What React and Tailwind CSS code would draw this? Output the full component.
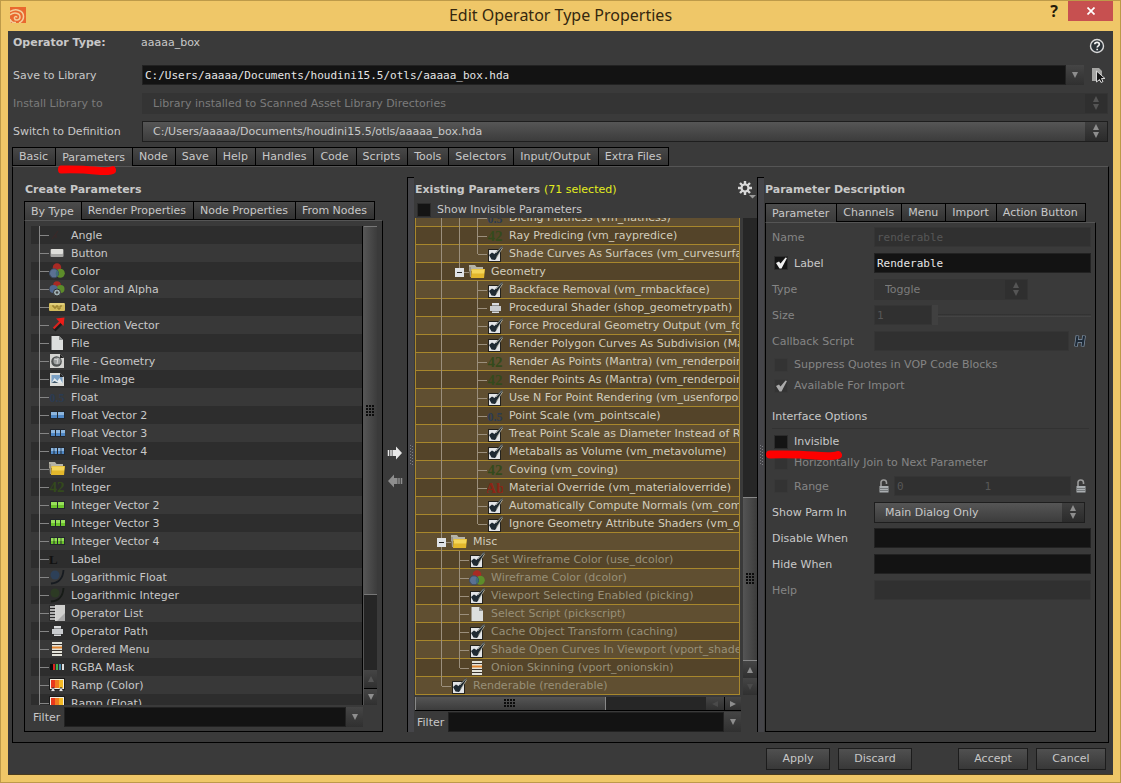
import { clsx } from 'clsx'
import { useState } from 'react'

const mainTabs = ['Basic', 'Parameters', 'Node', 'Save', 'Help', 'Handles', 'Code', 'Scripts', 'Tools', 'Selectors', 'Input/Output', 'Extra Files']
const createTabs = ['By Type', 'Render Properties', 'Node Properties', 'From Nodes']
const descTabs = ['Parameter', 'Channels', 'Menu', 'Import', 'Action Button']

const types = [
  ['Angle', 'angle'],
  ['Button', 'button'],
  ['Color', 'color'],
  ['Color and Alpha', 'alpha'],
  ['Data', 'data'],
  ['Direction Vector', 'arrow'],
  ['File', 'file'],
  ['File - Geometry', 'geo'],
  ['File - Image', 'image'],
  ['Float', 'float'],
  ['Float Vector 2', 'fv2'],
  ['Float Vector 3', 'fv3'],
  ['Float Vector 4', 'fv4'],
  ['Folder', 'folder'],
  ['Integer', 'int'],
  ['Integer Vector 2', 'iv2'],
  ['Integer Vector 3', 'iv3'],
  ['Integer Vector 4', 'iv4'],
  ['Label', 'label'],
  ['Logarithmic Float', 'logf'],
  ['Logarithmic Integer', 'logi'],
  ['Operator List', 'oplist'],
  ['Operator Path', 'op'],
  ['Ordered Menu', 'menu'],
  ['RGBA Mask', 'rgba'],
  ['Ramp (Color)', 'ramp'],
  ['Ramp (Float)', 'ramp'],
]

// tree column codes: | line, . blank, + branch, L last branch, M open folder, m last open folder
const params = [
  ['||+', 'float', 'Dicing Flatness (vm_flatness)'],
  ['||+', 'int', 'Ray Predicing (vm_raypredice)'],
  ['||L', 'check', 'Shade Curves As Surfaces (vm_curvesurfa'],
  ['|m', 'folder', 'Geometry'],
  ['|.+', 'check', 'Backface Removal (vm_rmbackface)'],
  ['|.+', 'op', 'Procedural Shader (shop_geometrypath)'],
  ['|.+', 'check', 'Force Procedural Geometry Output (vm_for'],
  ['|.+', 'check', 'Render Polygon Curves As Subdivision (Ma'],
  ['|.+', 'int', 'Render As Points (Mantra) (vm_renderpoin'],
  ['|.+', 'int', 'Render Points As (Mantra) (vm_renderpoin'],
  ['|.+', 'check', 'Use N For Point Rendering (vm_usenforpoi'],
  ['|.+', 'float', 'Point Scale (vm_pointscale)'],
  ['|.+', 'check', 'Treat Point Scale as Diameter Instead of Ra'],
  ['|.+', 'check', 'Metaballs as Volume (vm_metavolume)'],
  ['|.+', 'int', 'Coving (vm_coving)'],
  ['|.+', 'string', 'Material Override (vm_materialoverride)'],
  ['|.+', 'check', 'Automatically Compute Normals (vm_com'],
  ['|.L', 'check', 'Ignore Geometry Attribute Shaders (vm_ov'],
  ['M', 'folder', 'Misc'],
  ['|+', 'check', 'Set Wireframe Color (use_dcolor)', true],
  ['|+', 'color', 'Wireframe Color (dcolor)', true],
  ['|+', 'check', 'Viewport Selecting Enabled (picking)', true],
  ['|+', 'file', 'Select Script (pickscript)', true],
  ['|+', 'check', 'Cache Object Transform (caching)', true],
  ['|+', 'check', 'Shade Open Curves In Viewport (vport_shade', true],
  ['|L', 'menu', 'Onion Skinning (vport_onionskin)', true],
  ['L', 'check', 'Renderable (renderable)', true],
]

function Cells({ n, fill, light }) {
  const w = n === 2 ? 6 : n === 3 ? 4 : 2.5
  const step = n === 2 ? 7 : n === 3 ? 5 : 3.5
  return (
    <>
      <rect x="1" y="4" width="15" height="8" fill="#22262c" />
      {Array.from({ length: n }, (_, i) => (
        <g key={i}>
          <rect x={2 + i * step} y="5" width={w} height="6" fill={fill} />
          <rect x={2 + i * step} y="5" width={w} height="3" fill={light} />
        </g>
      ))}
    </>
  )
}

function Glyph({ children, fill, size = 15 }) {
  return (
    <text x="8" y="13" textAnchor="middle" fontSize={size} fontWeight="bold" fontFamily="Liberation Serif, serif" fill={fill}>
      {children}
    </text>
  )
}

const drawings = {
  angle: <path d="M3 12L9 4M7 11V8" stroke="#3c2828" fill="none" />,
  button: (
    <>
      <rect x="1.5" y="4" width="13" height="8" rx="1" fill="#a9a9a7" />
      <rect x="2" y="4" width="12" height="5" rx="1" fill="#dededa" />
    </>
  ),
  color: (
    <>
      <circle cx="8" cy="4.5" r="4.2" fill="#a92a24" />
      <circle cx="11.3" cy="10.3" r="4.5" fill="#5d8c2a" />
      <circle cx="5" cy="10.3" r="4.5" fill="#5b7193" stroke="#3d4b62" />
      <path d="M8 7.2a4.5 4.5 0 0 1 0 6.4a4.5 4.5 0 0 1 0-6.4z" fill="#3f6f78" />
    </>
  ),
  alpha: (
    <>
      <circle cx="8" cy="4" r="3.8" fill="#a92a24" />
      <circle cx="11.5" cy="8" r="4" fill="#5d8c2a" />
      <circle cx="4.5" cy="8" r="4" fill="#506890" />
      <circle cx="8" cy="11.5" r="3.5" fill="#9fb0b4" stroke="#333" />
      <circle cx="8" cy="11.5" r="1.3" fill="#444" />
    </>
  ),
  data: (
    <>
      <rect x="0" y="4" width="16" height="8" rx="1" fill="#d2bb5c" />
      <path d="M1 5h14" stroke="#f0e19a" />
      <path d="M3 7h2v2h2V7h2v3h2V7h2" stroke="#8c7526" fill="none" />
    </>
  ),
  arrow: (
    <>
      <path d="M5 13L12 6" stroke="#1c1c1c" strokeWidth="4" />
      <path d="M4.5 11.5L11 5" stroke="#d8241e" strokeWidth="2.2" />
      <path d="M7 1.5L15.5 .5L14.5 9z" fill="#ee1c18" />
    </>
  ),
  file: (
    <>
      <path d="M2.5 1H10l4 4v10H2.5z" fill="#dcdedd" />
      <path d="M10 1v4h4z" fill="#8b8e8e" />
    </>
  ),
  geo: (
    <>
      <path d="M1 1h10l4 4v10H1z" fill="#d5d5d2" />
      <circle cx="7.5" cy="8.5" r="5.3" fill="#505353" />
      <circle cx="8" cy="8" r="3.6" fill="#9da0a0" />
      <path d="M5 6l4 1M9 5l-1 6" stroke="#d4d4d4" />
      <path d="M11 1v4h4z" fill="#222" />
    </>
  ),
  image: (
    <>
      <path d="M1 2h10l4 4v9H1z" fill="#dadbd8" />
      <rect x="2.5" y="4" width="11" height="8" fill="#7ba0c4" />
      <path d="M2.5 12l3-5l3 3l2-3l3 5z" fill="#e4ebee" />
      <path d="M2.5 12l3-2l4 2z" fill="#41596b" />
      <path d="M11 2v4h4z" fill="#222" />
    </>
  ),
  float: <Glyph fill="#2b3b52" size={12}>0.5</Glyph>,
  int: <Glyph fill="#344a1c">42</Glyph>,
  string: <Glyph fill="#8c2416">Ab</Glyph>,
  fv2: <Cells n={2} fill="#4f87c4" light="#8db6de" />,
  fv3: <Cells n={3} fill="#4f87c4" light="#8db6de" />,
  fv4: <Cells n={4} fill="#4f87c4" light="#8db6de" />,
  iv2: <Cells n={2} fill="#6cc32c" light="#98e05a" />,
  iv3: <Cells n={3} fill="#6cc32c" light="#98e05a" />,
  iv4: <Cells n={4} fill="#6cc32c" light="#98e05a" />,
  folder: (
    <>
      <path d="M0 1h6l1.5 2H14v4H0z" fill="#b5b3a6" />
      <path d="M0 3h2v10H1z" fill="#9d988a" />
      <path d="M2.5 5H16l-1 9H2z" fill="#e3b72c" />
      <path d="M3 5.5h12.5l-.5 4H3z" fill="#f4d559" />
    </>
  ),
  label: <text x="0" y="13" fontSize="13" fontWeight="bold" fontFamily="Liberation Serif, serif" fill="#111">L</text>,
  logf: (
    <>
      <circle cx="6" cy="6" r="4.5" fill="#2d4058" />
      <path d="M2 14.5C10 14 14 9 14.5 1" stroke="#171b20" strokeWidth="1.8" fill="none" />
    </>
  ),
  logi: (
    <>
      <circle cx="6" cy="6" r="4.5" fill="#2c3a24" />
      <path d="M2 14.5C10 14 14 9 14.5 1" stroke="#171b17" strokeWidth="1.8" fill="none" />
    </>
  ),
  oplist: (
    <>
      <rect x="0" y="0" width="16" height="16" fill="#d0d0ce" />
      <rect x="0" y="0" width="6" height="16" fill="#2c2c2c" />
      <path d="M1 2h6M1 5h6M1 8h6M1 11h6M1 14h6" stroke="#dcdcda" strokeWidth="1.6" />
      <path d="M8 16l8-8v8z" fill="#aaa" />
    </>
  ),
  op: (
    <g shapeRendering="crispEdges">
      <rect x="5" y="3" width="7" height="10" fill="#d9dbdd" />
      <rect x="3" y="6" width="11" height="5" fill="#c9cccf" />
      <path d="M5 5.5h7M5 11.5h7" stroke="#8b8d8f" />
    </g>
  ),
  menu: (
    <>
      <rect x="3" y="1" width="10" height="14" fill="#e3e3da" />
      <path d="M3 3.5h10M3 9.5h10M3 12.5h10" stroke="#3a3530" />
      <path d="M3 6.5h10" stroke="#e0842e" strokeWidth="2" />
    </>
  ),
  rgba: (
    <>
      <rect x="1" y="5" width="3" height="6" fill="#0c0c0c" />
      <rect x="4" y="5" width="2" height="6" fill="#d8251e" />
      <rect x="7" y="5" width="2" height="6" fill="#49b04a" />
      <rect x="10" y="5" width="2" height="6" fill="#4788a8" />
      <rect x="13" y="5" width="2" height="6" fill="#dfdfdf" />
    </>
  ),
  ramp: (
    <>
      <rect x="0.5" y="1.5" width="15" height="11" fill="#f2efe2" stroke="#1a1a1a" />
      <rect x="2" y="3" width="5" height="8" fill="#e8381c" />
      <rect x="6" y="3" width="4" height="8" fill="#f07a1e" />
      <rect x="10" y="3" width="4" height="8" fill="#f4ba25" />
      <path d="M4 10l2.5 4.500h-5zM12 10l2.500 4.500h-5z" fill="#e8e8e8" stroke="#111" strokeWidth=".6" />
    </>
  ),
  check: (
    <>
      <rect x="1" y="3" width="13" height="13" fill="#23211c" />
      <rect x="2" y="4" width="11" height="11" fill="#e2e4e7" />
      <path d="M2 9l3-2.500l2.500 1.500L14.500 0L16 1L9.500 12L8 14L4.500 13.500z" fill="#1f2a33" />
      <path d="M9 7L15 .5M9.500 11.500L15.800 1.500" stroke="#d6d2bf" strokeWidth=".7" fill="none" />
    </>
  ),
}

function Icon({ name }) {
  return (
    <svg viewBox="0 0 16 16" className="mr-1.5 size-4 shrink-0" aria-hidden="true">
      {drawings[name]}
    </svg>
  )
}

function Branch({ kind, color }) {
  if (kind === '.') return <span className="w-[18px] shrink-0" />
  const down = kind === '|' || kind === '+' || kind === 'M'
  return (
    <svg viewBox="0 0 18 18" className="h-[18px] w-[18px] shrink-0" shapeRendering="crispEdges" aria-hidden="true">
      <path d={`M8.5 0V${down ? 18 : 9}${kind === '|' ? '' : 'M9 9.5H18'}`} stroke={color} fill="none" />
      {(kind === 'M' || kind === 'm') && (
        <>
          <rect x="4" y="5" width="9" height="9" fill="#dfe2e6" />
          <path d="M6 9.5h5" stroke="#222" />
        </>
      )}
    </svg>
  )
}

function Triangle({ dir, className }) {
  const d = { up: 'M1 7L4 1L7 7z', down: 'M1 1L4 7L7 1z', left: 'M7 1L1 4L7 7z', right: 'M1 1L7 4L1 7z' }[dir]
  return (
    <svg viewBox="0 0 8 8" className={clsx('size-2', className)} fill="currentColor" aria-hidden="true">
      <path d={d} />
    </svg>
  )
}

function Tabs({ items, active, onPick, label }) {
  return (
    <div role="tablist" aria-label={label} className="flex">
      {items.map((item) => (
        <button
          key={item}
          role="tab"
          aria-selected={item === active}
          onClick={() => onPick(item)}
          className={clsx(
            'h-[19px] whitespace-nowrap border-l border-t border-black pl-1.5 pr-[7px] last:border-r',
            item === active ? 'bg-linear-to-b from-[#4b4b4b] to-[#3a3a3a]' : 'border-b bg-linear-to-b from-[#484848] to-[#323232]'
          )}
        >
          {item}
        </button>
      ))}
    </div>
  )
}

function Select({ id, value, disabled, className }) {
  return (
    <div className={clsx('relative h-[21px] border', disabled ? 'border-[#343434] text-[#7b7b7b]' : 'border-[#1e1e1e] text-[#c8c8c8]', className)}>
      <select
        id={id}
        disabled={disabled}
        className={clsx(
          'block size-full appearance-none pl-2.5 pr-6 opacity-100 outline-none',
          disabled ? 'bg-[#343434]' : 'bg-linear-to-b from-[#565656] to-[#3c3c3c]'
        )}
      >
        <option>{value}</option>
      </select>
      <span
        className={clsx(
          'pointer-events-none absolute inset-y-0 right-0 flex w-[22px] flex-col items-center justify-center',
          disabled ? 'bg-[#2f2f2f] text-[#555]' : 'bg-linear-to-b from-[#3f3f3f] to-[#2b2b2b] text-[#8e8e8e]'
        )}
      >
        <Triangle dir="up" />
        <Triangle dir="down" />
      </span>
    </div>
  )
}

function Field({ id, disabled, value = '', label, className }) {
  return (
    <input
      id={id}
      aria-label={label}
      disabled={disabled}
      defaultValue={value}
      className={clsx(
        'h-5 min-w-0 border px-0.5 font-["DejaVu_Sans_Mono",monospace] outline-none',
        disabled ? 'border-[#353535] bg-[#303030] text-[#575757]' : 'border-[#222] bg-[#131313] text-[#e6e6e6]',
        className
      )}
    />
  )
}

function Check({ children, disabled, checked, muted }) {
  return (
    <label className={clsx('flex items-center gap-1.5', muted && 'text-[#858585]')}>
      <span className="relative ml-0.5 size-3.5">
        <input
          type="checkbox"
          disabled={disabled}
          defaultChecked={checked}
          className={clsx('peer block size-full appearance-none border', disabled ? 'border-[#383838] bg-[#333]' : 'border-[#2c2c2c] bg-[#141414]')}
        />
        <svg
          viewBox="0 0 14 14"
          className={clsx('pointer-events-none absolute inset-0 hidden size-full peer-checked:block', disabled ? 'text-[#aaa]' : 'text-[#eee]')}
          aria-hidden="true"
        >
          <path d="M2 7L5 5.500L6.500 7.500L11.500 1.500L13 2L7.500 12.500H5.500z" fill="currentColor" />
        </svg>
      </span>
      {children}
    </label>
  )
}

function ArrowButton({ dir, label, className }) {
  return (
    <button aria-label={label} className={clsx('flex shrink-0 items-center justify-center bg-linear-to-b from-[#454545] to-[#303030]', className)}>
      <Triangle dir={dir} />
    </button>
  )
}

function Grip({ cols = 3, rows = 4 }) {
  return (
    <svg viewBox={`0 0 ${cols * 3} ${rows * 3}`} width={cols * 3} height={rows * 3} shapeRendering="crispEdges" aria-hidden="true">
      {Array.from({ length: cols * rows }, (_, i) => (
        <rect key={i} x={(i % cols) * 3} y={Math.floor(i / cols) * 3} width="2" height="2" fill="#0c0c0c" />
      ))}
    </svg>
  )
}

function Splitter() {
  return (
    <div className="flex w-[7px] shrink-0 items-center justify-center border-l border-t border-black bg-[#454549]">
      <svg viewBox="0 0 3 20" className="h-5 w-[3px]" shapeRendering="crispEdges" aria-hidden="true">
        <path d="M.5 0V20M2.5 1V20" stroke="#7d7d82" strokeDasharray="1 2" />
      </svg>
    </div>
  )
}

function FilterRow({ id, className }) {
  return (
    <div className={clsx('flex h-5 shrink-0 items-center', className)}>
      <label htmlFor={id} className="w-[31px] shrink-0">Filter</label>
      <Field id={id} className="flex-1" />
      <ArrowButton dir="down" label="Filter history" className="h-5 w-[17px] text-[#8e8e8e]" />
    </div>
  )
}

function Stroke({ className }) {
  return (
    <svg viewBox="0 0 76 10" preserveAspectRatio="none" className={clsx('pointer-events-none absolute', className)} aria-hidden="true">
      <path d="M4 4.500Q30 4 48 5.500T72 5" stroke="#fe0000" strokeWidth="8" strokeLinecap="round" fill="none" />
    </svg>
  )
}

function Row({ label, htmlFor, muted, children }) {
  return (
    <div className="flex h-[26px] items-center">
      <label htmlFor={htmlFor} className={clsx('w-[102px] shrink-0', muted && 'text-[#858585]')}>
        {label}
      </label>
      {children}
    </div>
  )
}

function CheckRow({ check, children }) {
  return (
    <div className="flex h-[26px] items-center">
      <div className="w-[102px] shrink-0">{check}</div>
      {children}
    </div>
  )
}

function Lock() {
  return (
    <svg viewBox="0 0 12 14" className="mx-1 h-3.5 w-3 shrink-0" aria-hidden="true">
      <path d="M3 7V4a2.500 2.500 0 0 1 5.500-.5V5" stroke="#9a9a9a" strokeWidth="1.600" fill="none" />
      <rect x="1.500" y="7" width="9" height="6.500" fill="#a9adb0" />
      <path d="M1.500 9.500h9M1.500 11.500h9" stroke="#74787a" />
    </svg>
  )
}

function TitleBar() {
  return (
    <header className="grid h-[30px] shrink-0 grid-cols-[1fr_auto_1fr]">
      <svg viewBox="0 0 16 16" className="ml-0.5 mt-1.5 size-4" aria-hidden="true">
        <rect width="16" height="16" fill="#e9682f" />
        <path
          d="M0 4.500C6 1 13.500 3.500 13.500 9.500C13.500 13 11 15 9 16M0 8C4 4.500 10 6 10 10C10 13.500 5 14 4.500 11.500C4 9.500 6.500 8.800 7 10.500M0 16V12C1 15 3 16 6 15.500"
          stroke="#f3cf9b"
          strokeWidth="1.500"
          fill="none"
        />
      </svg>
      <h1 className="pt-0.5 font-['Noto_Sans',sans-serif] text-base leading-6 text-[#35280f]">Edit Operator Type Properties</h1>
      <div className="flex h-5 items-center justify-end">
        <button className="w-7 font-['Noto_Sans',sans-serif] text-base font-bold text-[#241b0a]">?</button>
        <button aria-label="Close" className="flex h-5 w-[45px] items-center justify-center bg-[#c75050]">
          <svg viewBox="0 0 8 8" className="size-2" aria-hidden="true">
            <path d="M.5.5l7 7M7.5.5l-7 7" stroke="#fff" strokeWidth="1.700" />
          </svg>
        </button>
      </div>
    </header>
  )
}

function LibraryRows() {
  return (
    <div className="pb-0.5">
      <div className="flex h-[30px] items-center">
        <span className="w-32 pb-2 font-bold">Operator Type:</span>
        <span className="flex-1 pb-2">aaaaa_box</span>
        <button aria-label="Help" className="mr-[3px]">
          <svg viewBox="0 0 16 16" className="size-4" aria-hidden="true">
            <circle cx="8" cy="8" r="6.500" fill="#2b3238" stroke="#d9d9d9" strokeWidth="1.400" />
            <path d="M5.800 6.300C5.800 3.600 10.300 3.700 10.300 6.200C10.300 7.800 8.200 7.800 8.200 9.500M8.200 10.700V12.300" stroke="#f0f0f0" strokeWidth="1.700" fill="none" />
          </svg>
        </button>
      </div>
      <div className="flex h-7 items-center">
        <label htmlFor="save" className="w-[129px] shrink-0">Save to Library</label>
        <Field id="save" value="C:/Users/aaaaa/Documents/houdini15.5/otls/aaaaa_box.hda" className="flex-1" />
        <ArrowButton dir="down" label="Recent libraries" className="h-5 w-[18px] text-[#8e8e8e]" />
        <button aria-label="Choose file" className="ml-2 mr-0.5">
          <svg viewBox="0 0 14 16" className="h-4 w-3.5" aria-hidden="true">
            <path d="M0 1h7l3 3v10H0z" fill="#a5a5a3" />
            <path d="M4.500 4v11l3-2.500l1.500 3l2-1l-1.500-3H13z" fill="#151515" stroke="#d8d8d8" />
          </svg>
        </button>
      </div>
      <div className="flex h-7 items-center">
        <label htmlFor="install" className="w-[129px] shrink-0 text-[#7b7b7b]">Install Library to</label>
        <Select id="install" disabled value="Library installed to Scanned Asset Library Directories" className="flex-1" />
      </div>
      <div className="flex h-7 items-center">
        <label htmlFor="switch" className="w-[129px] shrink-0">Switch to Definition</label>
        <Select id="switch" value="C:/Users/aaaaa/Documents/houdini15.5/otls/aaaaa_box.hda" className="flex-1" />
      </div>
    </div>
  )
}

function CreateParameters() {
  const [tab, setTab] = useState('By Type')
  return (
    <section className="flex min-h-0 min-w-0 flex-col">
      <h2 className="h-6 shrink-0 pl-px pt-1 font-bold">Create Parameters</h2>
      <Tabs items={createTabs} active={tab} onPick={setTab} label="Create from" />
      <div className="flex min-h-0 flex-1 flex-col border border-black border-t-[#555] p-1.5 pb-1 pr-[5px] pt-[5px]">
        <div className="flex min-h-0 flex-1">
          <ul className="flex-1 overflow-hidden border-r border-black bg-[#2e2e2e]">
            {types.map(([name, icon]) => (
              <li key={name} className="flex h-[18px] items-center odd:bg-[#2d2d2d] even:bg-[#383838]">
                <Branch kind="+" color="#858585" />
                <Icon name={icon} />
                {name}
              </li>
            ))}
          </ul>
          <div className="flex w-3.5 flex-col border-l border-[#555] bg-[#262626]">
            <div className="flex flex-[368] items-center justify-center border-y border-[#777] bg-linear-to-r from-[#555] to-[#3c3c3c]">
              <Grip />
            </div>
            <div className="flex-[75]" />
            <ArrowButton dir="up" label="Scroll up" className="h-[18px] text-[#555]" />
            <ArrowButton dir="down" label="Scroll down" className="h-[17px] border-t border-black text-[#8e8e8e]" />
          </div>
        </div>
        <FilterRow id="type-filter" className="mr-3.5 mt-0.5 pl-0.5" />
      </div>
    </section>
  )
}

function MoveButtons() {
  return (
    <div className="flex flex-col items-center justify-center gap-3 pt-6">
      <button aria-label="Add parameter">
        <svg viewBox="0 0 16 16" className="size-4" aria-hidden="true">
          <path d="M1.500 5v6M4 5v6" stroke="#e8e8e8" strokeWidth="1.500" />
          <path d="M5.500 5H9V1.500L15 8L9 14.500V11H5.500z" fill="#e8e8e8" />
        </svg>
      </button>
      <button aria-label="Remove parameter">
        <svg viewBox="0 0 16 16" className="size-4" aria-hidden="true">
          <path d="M14.500 5v6M12 5v6" stroke="#8e8e8e" strokeWidth="1.500" />
          <path d="M10.500 5H7V1.500L1 8L7 14.500V11H10.500z" fill="#8e8e8e" />
        </svg>
      </button>
    </div>
  )
}

function ExistingParameters() {
  return (
    <section className="flex min-h-0 min-w-0">
      <Splitter />
      <div className="flex min-w-0 flex-1 flex-col pl-px">
        <div className="flex h-6 shrink-0 items-center">
          <h2 className="flex-1 font-bold">
            Existing Parameters <span className="font-normal text-[#e3ee1e]">(71 selected)</span>
          </h2>
          <button aria-label="Parameter options">
            <svg viewBox="0 0 20 20" className="size-5" aria-hidden="true">
              <g stroke="#d8d8d8" strokeWidth="2.400">
                <path d="M8 2v14M1 9h14M3 4l10 10M13 4L3 14" />
              </g>
              <circle cx="8" cy="9" r="4.500" fill="#d8d8d8" />
              <circle cx="8" cy="9" r="2.400" fill="#3a3a3a" />
              <path d="M12 16h7l-3.500 3.500z" fill="#999" />
            </svg>
          </button>
        </div>
        <div className="h-[17px] shrink-0">
          <Check>Show Invisible Parameters</Check>
        </div>
        <div className="flex min-h-0 flex-1">
          <ul className="flex min-w-0 flex-1 flex-col justify-end overflow-hidden border-x border-[#a8872c] bg-[#5f4e2f]">
            {params.map(([tree, icon, name, muted]) => (
              <li
                key={name}
                className={clsx(
                  'flex h-[18px] shrink-0 items-center whitespace-nowrap border-b border-[#a8872c] pl-[17px] odd:bg-[#604f31] even:bg-[#544429]',
                  muted ? 'text-[#989078]' : 'text-[#d2cdbc]'
                )}
              >
                {[...tree].map((kind, i) => (
                  <Branch key={i} kind={kind} color="#9b8f7c" />
                ))}
                <Icon name={icon} />
                {name}
              </li>
            ))}
          </ul>
          <div className="ml-[3px] flex w-3.5 flex-col bg-[#262626]">
            <div className="flex-[280]" />
            <div className="flex flex-[163] items-center justify-center border-y border-[#888] bg-linear-to-r from-[#555] to-[#3c3c3c]">
              <Grip />
            </div>
            <ArrowButton dir="up" label="Scroll up" className="h-[17px] text-[#8e8e8e]" />
            <ArrowButton dir="down" label="Scroll down" className="h-[17px] text-[#4a4a4a]" />
          </div>
        </div>
        <div className="mr-4 mt-0.5 flex h-3.5 shrink-0 border-b border-black bg-[#262626]">
          <div className="flex flex-[190] items-center justify-center border-x border-[#888] bg-linear-to-b from-[#555] to-[#3c3c3c]">
            <Grip cols={4} rows={3} />
          </div>
          <div className="flex-[101]" />
          <ArrowButton dir="left" label="Scroll left" className="w-[18px] text-[#4a4a4a]" />
          <ArrowButton dir="right" label="Scroll right" className="w-[17px] border-l border-black text-[#8e8e8e]" />
        </div>
        <FilterRow id="param-filter" className="mr-4 mt-px pl-0.5" />
      </div>
    </section>
  )
}

function ParameterDescription() {
  const [tab, setTab] = useState('Parameter')
  return (
    <section className="flex min-h-0 min-w-0">
      <Splitter />
      <div className="flex min-w-0 flex-1 flex-col pl-px">
        <h2 className="mb-0.5 h-6 shrink-0 pt-1 font-bold">Parameter Description</h2>
        <Tabs items={descTabs} active={tab} onPick={setTab} label="Parameter settings" />
        <div className="flex-1 border border-black border-t-[#555] pl-1.5 pr-1 pt-px">
          <Row label="Name" htmlFor="name" muted>
            <Field id="name" disabled value="renderable" className="flex-1" />
          </Row>
          <CheckRow check={<Check checked>Label</Check>}>
            <Field label="Label text" value="Renderable" className="flex-1" />
          </CheckRow>
          <Row label="Type" htmlFor="type" muted>
            <Select id="type" disabled value="Toggle" className="w-[154px]" />
          </Row>
          <Row label="Size" htmlFor="size" muted>
            <Field id="size" disabled value="1" className="w-[58px]" />
            <input
              type="range"
              aria-label="Size slider"
              disabled
              defaultValue="0"
              className="h-5 min-w-0 flex-1 appearance-none bg-transparent bg-[linear-gradient(#2e2e2e,#484848)] bg-size-[100%_3px] bg-center bg-no-repeat [&::-webkit-slider-thumb]:h-5 [&::-webkit-slider-thumb]:w-1.5 [&::-webkit-slider-thumb]:appearance-none [&::-webkit-slider-thumb]:bg-[#404040]"
            />
          </Row>
          <Row label="Callback Script" htmlFor="callback" muted>
            <Field id="callback" disabled className="flex-1" />
            <button aria-label="Script language" className="mx-1">
              <svg viewBox="0 0 14 16" className="h-4 w-3.5" aria-hidden="true">
                <path d="M4.500 2.500L3 13.500M11 2.500L9.500 13.500M3 8h7" stroke="#8497ab" strokeWidth="3.600" fill="none" />
                <path d="M4.500 3L3 13M11 3L9.500 13M3 8h7" stroke="#1d2936" strokeWidth="2.200" fill="none" />
              </svg>
            </button>
          </Row>
          <div className="flex h-[21px] items-center">
            <Check disabled muted>Suppress Quotes in VOP Code Blocks</Check>
          </div>
          <div className="flex h-[21px] items-center">
            <Check disabled checked muted>Available For Import</Check>
          </div>
          <h3 className="mb-0.5 mr-0.5 mt-2.5 border-b border-[#323232] py-0.5 leading-[18px]">Interface Options</h3>
          <div className="flex h-[21px] items-center">
            <Check>Invisible</Check>
          </div>
          <div className="relative flex h-[21px] items-center">
            <Check disabled muted>Horizontally Join to Next Parameter</Check>
            <Stroke className="-left-1.5 -top-0.5 h-2.5 w-[76px]" />
          </div>
          <CheckRow check={<Check disabled muted>Range</Check>}>
            <Lock />
            <Field label="Range start" disabled value="0" className="w-0 flex-1 border-r-0" />
            <Field label="Range end" disabled value="1" className="w-0 flex-1 border-l-0" />
            <Lock />
          </CheckRow>
          <Row label="Show Parm In" htmlFor="show">
            <Select id="show" value="Main Dialog Only" className="mr-1.5 flex-1" />
          </Row>
          <Row label="Disable When" htmlFor="disable">
            <Field id="disable" className="flex-1" />
          </Row>
          <Row label="Hide When" htmlFor="hide">
            <Field id="hide" className="flex-1" />
          </Row>
          <Row label="Help" htmlFor="help" muted>
            <Field id="help" disabled className="flex-1" />
          </Row>
        </div>
      </div>
    </section>
  )
}

function Action({ children, className }) {
  return (
    <button className={clsx('h-[22px] border border-[#1c1c1c] bg-linear-to-b from-[#505050] to-[#383838]', className)}>{children}</button>
  )
}

export default function App() {
  const [tab, setTab] = useState('Parameters')

  return (
    <div className="flex h-screen flex-col border border-[#bd9a49] bg-[#efc768] px-[7px] pb-[7px] font-['DejaVu_Sans',sans-serif] text-[11px] leading-[17px] text-[#c8c8c8]">
      <TitleBar />
      <div className="flex min-h-0 flex-1 flex-col border-b border-[#4a3c1e] bg-[#3a3a3a] px-[5px]">
        <LibraryRows />
        <div className="relative -ml-px">
          <Tabs items={mainTabs} active={tab} onPick={setTab} label="Operator type" />
          <Stroke className="left-[46px] top-[18px] z-10 h-2.5 w-[58px]" />
        </div>
        <main className="-ml-px -mr-px grid min-h-0 flex-1 grid-cols-[359fr_24px_350fr_339fr] border border-black border-t-[#555] pb-2.5 pl-[11px] pr-3 pt-2.5">
          <CreateParameters />
          <MoveButtons />
          <ExistingParameters />
          <ParameterDescription />
        </main>
        <footer className="flex h-[31px] shrink-0 items-center justify-end gap-2 pr-0.5">
          <Action className="w-16">Apply</Action>
          <Action className="w-[74px]">Discard</Action>
          <Action className="ml-[38px] w-[70px]">Accept</Action>
          <Action className="w-[70px]">Cancel</Action>
        </footer>
      </div>
    </div>
  )
}
